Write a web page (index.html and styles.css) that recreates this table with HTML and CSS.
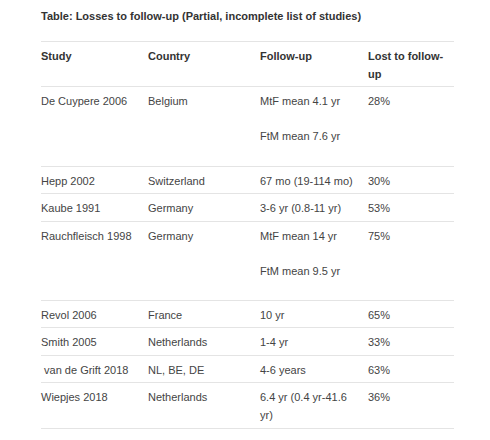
FILE: index.html
```html
<!DOCTYPE html>
<html>
<head>
<meta charset="utf-8">
<link rel="stylesheet" href="styles.css">
</head>
<body>
<div class="page">
  <div class="caption">Table: Losses to follow-up (Partial, incomplete list of studies)</div>
  <table class="studies">
    <colgroup>
      <col class="c-study">
      <col class="c-country">
      <col class="c-follow">
      <col class="c-lost">
    </colgroup>
    <thead>
      <tr><th>Study</th><th>Country</th><th>Follow-up</th><th>Lost to follow-up</th></tr>
    </thead>
    <tbody>
      <tr><td>De Cuypere 2006</td><td>Belgium</td><td><p>MtF mean 4.1 yr</p><p>FtM mean 7.6 yr</p></td><td>28%</td></tr>
      <tr><td>Hepp 2002</td><td>Switzerland</td><td>67 mo (19-114 mo)</td><td>30%</td></tr>
      <tr><td>Kaube 1991</td><td>Germany</td><td>3-6 yr (0.8-11 yr)</td><td>53%</td></tr>
      <tr><td>Rauchfleisch 1998</td><td>Germany</td><td><p>MtF mean 14 yr</p><p>FtM mean 9.5 yr</p></td><td>75%</td></tr>
      <tr><td>Revol 2006</td><td>France</td><td>10 yr</td><td>65%</td></tr>
      <tr><td>Smith 2005</td><td>Netherlands</td><td>1-4 yr</td><td>33%</td></tr>
      <tr><td>&nbsp;van de Grift 2018</td><td>NL, BE, DE</td><td>4-6 years</td><td>63%</td></tr>
      <tr><td>Wiepjes 2018</td><td>Netherlands</td><td>6.4 yr (0.4 yr-41.6 yr)</td><td>36%</td></tr>
    </tbody>
  </table>
</div>
</body>
</html>
```
FILE: styles.css
```css
html, body {
  margin: 0;
  padding: 0;
  background: #ffffff;
}
.page {
  padding: 7px 0 0 41px;
  font-family: "Liberation Sans", Arial, sans-serif;
  font-size: 11px;
  line-height: 18px;
  color: #444444;
}
.caption {
  font-weight: bold;
  color: #333333;
  margin-bottom: 16px;
}
.studies {
  border-collapse: collapse;
  width: 413px;
  table-layout: fixed;
  border-bottom: 1px solid #e4e4e4;
}
.c-study { width: 107px; }
.c-country { width: 112px; }
.c-follow { width: 108px; }
.c-lost { width: 86px; }
.studies th,
.studies td {
  text-align: left;
  vertical-align: top;
  padding: 5px 8px 3.4px 0;
  border-top: 1px solid #e4e4e4;
}
.studies th {
  font-weight: bold;
  color: #333333;
}
.studies p {
  margin: 0 0 17px 0;
}
```
